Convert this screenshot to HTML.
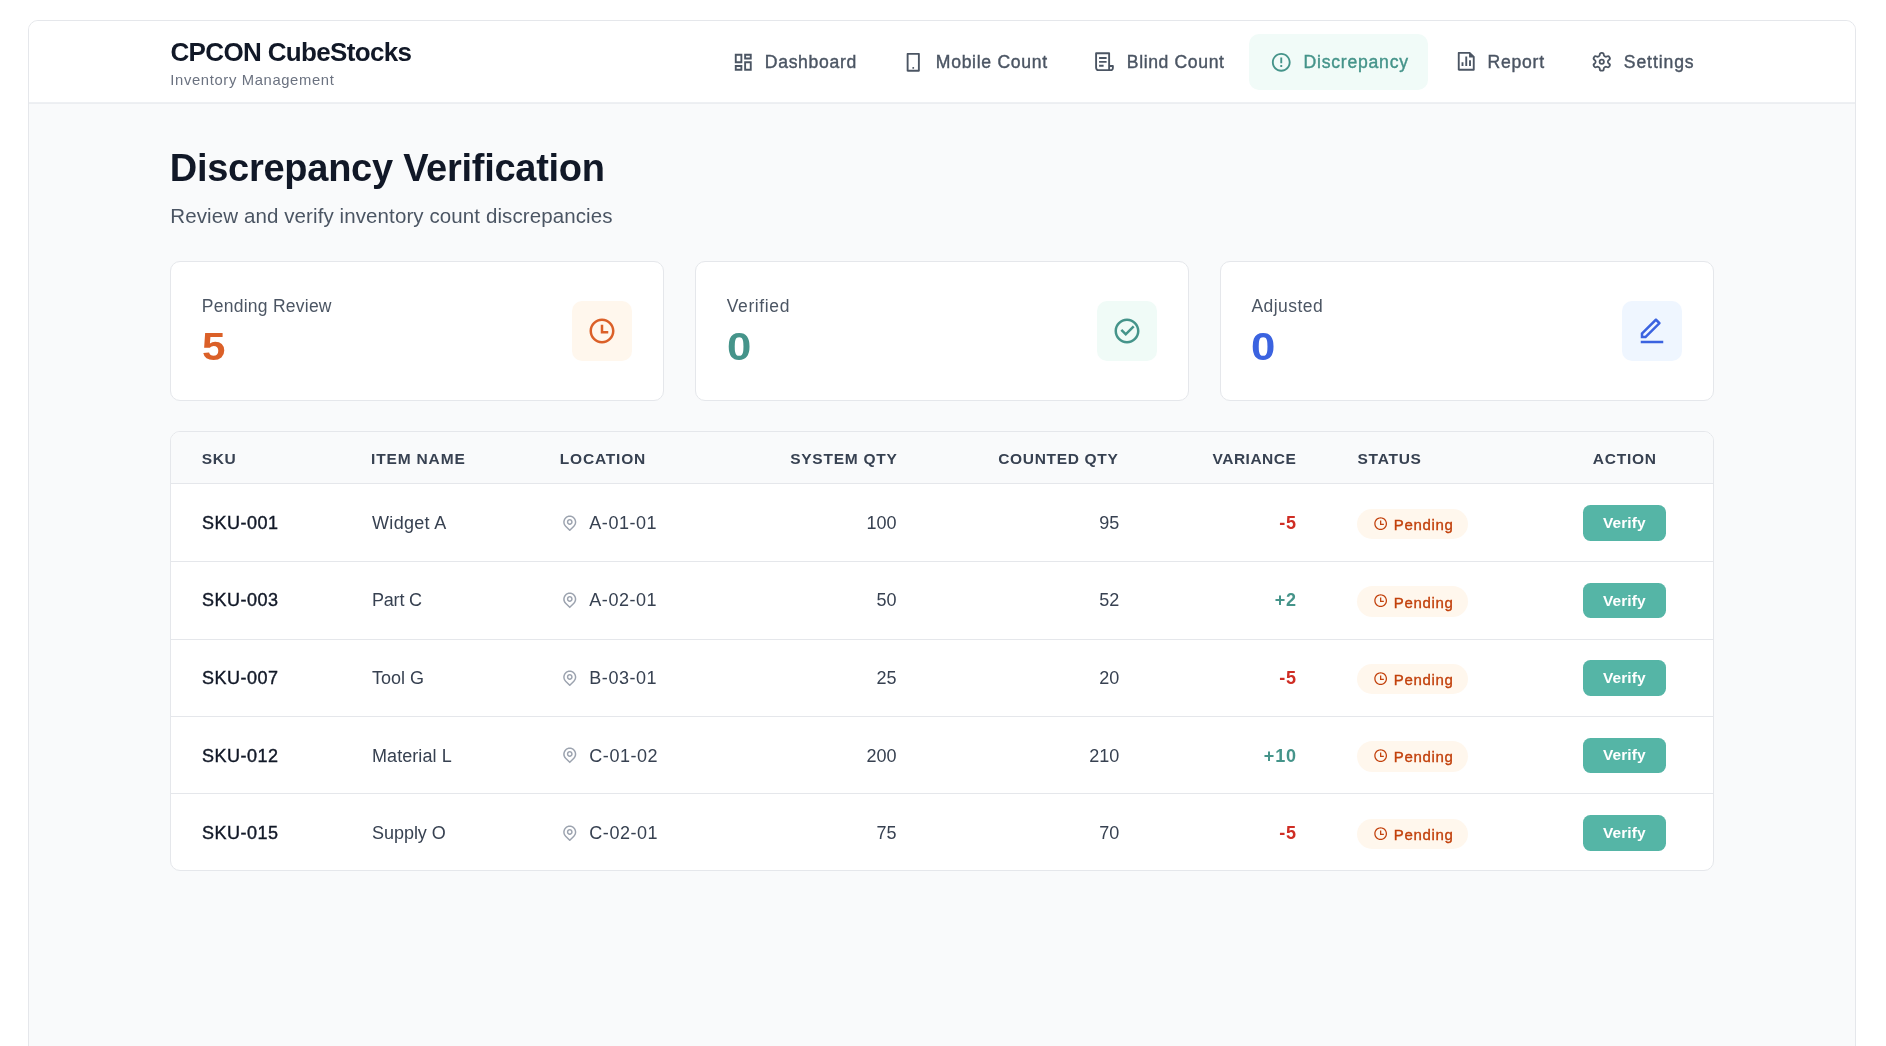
<!DOCTYPE html>
<html><head><meta charset="utf-8"><title>Discrepancy Verification</title>
<style>
html,body{margin:0;padding:0;background:#fff;width:1886px;height:1046px;overflow:hidden;}
body{position:relative;font-family:"Liberation Sans", sans-serif;}
.t{position:absolute;white-space:nowrap;}
</style></head><body>
<div id="root" style="position:absolute;left:0;top:0;width:1886px;height:1046px;will-change:transform;background:#fff;"><div style="position:absolute;left:28px;top:20px;width:1828px;height:1100px;border:1px solid #e5e7eb;border-radius:10px;background:#f9fafb;box-sizing:border-box;"></div><div style="position:absolute;left:29px;top:21px;width:1826px;height:81px;background:#fff;border-radius:9px 9px 0 0;"></div><div style="position:absolute;left:29px;top:102px;width:1826px;height:1px;background:#eef0f3;"></div><div style="position:absolute;left:29px;top:103px;width:1826px;height:1px;background:#eceef1;"></div><div class="t" style="left:170.50px;top:37px;font-size:26px;line-height:30px;color:#111827;font-weight:700;letter-spacing:-0.66px;">CPCON CubeStocks</div><div class="t" style="left:170.30px;top:72px;font-size:14.8px;line-height:16px;color:#6b7280;letter-spacing:0.64px;">Inventory Management</div><svg style="position:absolute;left:731.5px;top:50.65px;" width="22.5" height="22.5" viewBox="0 0 24 24" fill="#4b5563"><path d="M13 21V11H21V21H13ZM3 13V3H11V13H3ZM9 11V5H5V11H9ZM3 21V15H11V21H3ZM5 19H9V17H5V19ZM15 19H19V13H15V19ZM13 3H21V9H13V3ZM15 5V7H19V5H15Z"/></svg><div class="t" style="left:764.80px;top:52px;font-size:17.6px;line-height:20px;color:#4b5563;letter-spacing:0.68px;-webkit-text-stroke:0.4px #4b5563;">Dashboard</div><svg style="position:absolute;left:902.45px;top:50.65px;" width="22.5" height="22.5" viewBox="0 0 24 24" fill="#4b5563"><path d="M7 4V20H17V4H7ZM6 2H18C18.5523 2 19 2.44772 19 3V21C19 21.5523 18.5523 22 18 22H6C5.44772 22 5 21.5523 5 21V3C5 2.44772 5.44772 2 6 2ZM12 17C12.5523 17 13 17.4477 13 18C13 18.5523 12.5523 19 12 19C11.4477 19 11 18.5523 11 18C11 17.4477 11.4477 17 12 17Z"/></svg><div class="t" style="left:935.80px;top:52px;font-size:17.6px;line-height:20px;color:#4b5563;letter-spacing:0.7px;-webkit-text-stroke:0.4px #4b5563;">Mobile Count</div><svg style="position:absolute;left:1093px;top:50px;color:#4b5563" width="22.5" height="22.5" viewBox="0 0 24 24"><g fill="none" stroke="currentColor" stroke-width="2" stroke-linejoin="round"><path d="M17.2 21.5V3.46H3.3V19A2.5 2.5 0 0 0 5.8 21.5H19A2.2 2.2 0 0 0 21.2 19.3V17.07H17.2"/><path d="M6.5 8.57H14.5M6.5 12.7H14.5M6.5 16.8H11.3"/></g></svg><div class="t" style="left:1126.80px;top:52px;font-size:17.6px;line-height:20px;color:#4b5563;letter-spacing:0.62px;-webkit-text-stroke:0.4px #4b5563;">Blind Count</div><div style="position:absolute;left:1249px;top:34px;width:179px;height:56px;background:#f1fbf8;border-radius:10px;"></div><svg style="position:absolute;left:1270.25px;top:50.65px;" width="22.5" height="22.5" viewBox="0 0 24 24" fill="#45948a"><path d="M12 22C6.47715 22 2 17.5228 2 12C2 6.47715 6.47715 2 12 2C17.5228 2 22 6.47715 22 12C22 17.5228 17.5228 22 12 22ZM12 20C16.4183 20 20 16.4183 20 12C20 7.58172 16.4183 4 12 4C7.58172 4 4 7.58172 4 12C4 16.4183 7.58172 20 12 20ZM11 15H13V17H11V15ZM11 7H13V13H11V7Z"/></svg><div class="t" style="left:1303.60px;top:52px;font-size:17.6px;line-height:20px;color:#45948a;letter-spacing:0.76px;-webkit-text-stroke:0.4px #45948a;">Discrepancy</div><svg style="position:absolute;left:1454.85px;top:50.25px;" width="22.5" height="22.5" viewBox="0 0 24 24" fill="#4b5563"><path d="M11 7H13V17H11V7ZM15 11H17V17H15V11ZM7 13H9V17H7V13ZM15 4H5V20H19V8H15V4ZM3 2.9918C3 2.44405 3.44749 2 3.9985 2H16L20.9997 7L21 20.9925C21 21.5489 20.5551 22 20.0066 22H3.9934C3.44476 22 3 21.5447 3 21.0082V2.9918Z"/></svg><div class="t" style="left:1487.50px;top:52px;font-size:17.6px;line-height:20px;color:#4b5563;letter-spacing:0.75px;-webkit-text-stroke:0.4px #4b5563;">Report</div><svg style="position:absolute;left:1590.9px;top:51.15px;color:#4b5563" width="21.5" height="21.5" viewBox="0 0 24 24"><g fill="none" stroke="currentColor" stroke-width="2" stroke-linecap="round" stroke-linejoin="round"><path d="M12.22 2h-.44a2 2 0 0 0-2 2v.18a2 2 0 0 1-1 1.73l-.43.25a2 2 0 0 1-2 0l-.15-.08a2 2 0 0 0-2.73.73l-.22.38a2 2 0 0 0 .73 2.73l.15.1a2 2 0 0 1 1 1.72v.51a2 2 0 0 1-1 1.74l-.15.09a2 2 0 0 0-.73 2.73l.22.38a2 2 0 0 0 2.730.73l.15-.08a2 2 0 0 1 2 0l.43.25a2 2 0 0 1 1 1.73V20a2 2 0 0 0 2 2h.44a2 2 0 0 0 2-2v-.18a2 2 0 0 1 1-1.73l.43-.25a2 2 0 0 1 2 0l.15.08a2 2 0 0 0 2.73-.73l.22-.39a2 2 0 0 0-.73-2.73l-.15-.08a2 2 0 0 1-1-1.74v-.5a2 2 0 0 1 1-1.74l.15-.09a2 2 0 0 0 .73-2.73l-.22-.38a2 2 0 0 0-2.73-.73l-.15.08a2 2 0 0 1-2 0l-.43-.25a2 2 0 0 1-1-1.73V4a2 2 0 0 0-2-2z"/><circle cx="12" cy="12" r="2.4"/></g></svg><div class="t" style="left:1623.80px;top:52px;font-size:17.6px;line-height:20px;color:#4b5563;letter-spacing:0.9px;-webkit-text-stroke:0.4px #4b5563;">Settings</div><div class="t" style="left:169.80px;top:147px;font-size:38px;line-height:42px;color:#111827;font-weight:700;letter-spacing:-0.27px;">Discrepancy Verification</div><div class="t" style="left:170.30px;top:204px;font-size:20.5px;line-height:23px;color:#4b5563;letter-spacing:0.1px;">Review and verify inventory count discrepancies</div><div style="position:absolute;left:170px;top:261px;width:494.33px;height:140px;background:#fff;border:1px solid #e5e7eb;border-radius:10px;box-sizing:border-box;"></div><div class="t" style="left:201.80px;top:296px;font-size:17.5px;line-height:20px;color:#4b5563;letter-spacing:0.25px;">Pending Review</div><div class="t" style="left:202.30px;top:325px;font-size:39px;line-height:43px;color:#db6028;font-weight:700;transform:scaleX(1.08);transform-origin:0 0;">5</div><div style="position:absolute;left:572px;top:301px;width:60px;height:60px;background:#fff7ed;border-radius:10px;"></div><svg style="position:absolute;left:587px;top:316px;" width="30" height="30" viewBox="0 0 24 24" fill="#db6028"><path d="M12 22C6.47715 22 2 17.5228 2 12C2 6.47715 6.47715 2 12 2C17.5228 2 22 6.47715 22 12C22 17.5228 17.5228 22 12 22ZM12 20C16.4183 20 20 16.4183 20 12C20 7.58172 16.4183 4 12 4C7.58172 4 4 7.58172 4 12C4 16.4183 7.58172 20 12 20ZM13 12H17V14H11V7H13V12Z"/></svg><div style="position:absolute;left:695px;top:261px;width:494.33px;height:140px;background:#fff;border:1px solid #e5e7eb;border-radius:10px;box-sizing:border-box;"></div><div class="t" style="left:726.80px;top:296px;font-size:17.5px;line-height:20px;color:#4b5563;letter-spacing:0.6px;">Verified</div><div class="t" style="left:726.70px;top:325px;font-size:39px;line-height:43px;color:#45948a;font-weight:700;transform:scaleX(1.12);transform-origin:0 0;">0</div><div style="position:absolute;left:1097px;top:301px;width:60px;height:60px;background:#f0fbf7;border-radius:10px;"></div><svg style="position:absolute;left:1112px;top:316px;" width="30" height="30" viewBox="0 0 24 24" fill="#45948a"><path d="M12 22C6.47715 22 2 17.5228 2 12C2 6.47715 6.47715 2 12 2C17.5228 2 22 6.47715 22 12C22 17.5228 17.5228 22 12 22ZM12 20C16.4183 20 20 16.4183 20 12C20 7.58172 16.4183 4 12 4C7.58172 4 4 7.58172 4 12C4 16.4183 7.58172 20 12 20ZM11.0026 16L6.75999 11.7574L8.17421 10.3431L11.0026 13.1716L16.6595 7.51472L18.0737 8.92893L11.0026 16Z"/></svg><div style="position:absolute;left:1219.67px;top:261px;width:494.33px;height:140px;background:#fff;border:1px solid #e5e7eb;border-radius:10px;box-sizing:border-box;"></div><div class="t" style="left:1251.47px;top:296px;font-size:17.5px;line-height:20px;color:#4b5563;letter-spacing:0.45px;">Adjusted</div><div class="t" style="left:1251.37px;top:325px;font-size:39px;line-height:43px;color:#3b63e0;font-weight:700;transform:scaleX(1.12);transform-origin:0 0;">0</div><div style="position:absolute;left:1621.67px;top:301px;width:60px;height:60px;background:#eff6ff;border-radius:10px;"></div><svg style="position:absolute;left:1636.67px;top:316px;" width="30" height="30" viewBox="0 0 24 24" fill="#3b63e0"><path d="M6.41421 15.89L16.5563 5.74786L15.1421 4.33365L5 14.4758V15.89H6.41421ZM7.24264 17.89H3V13.6474L14.435 2.21233C14.8256 1.8218 15.4587 1.8218 15.8492 2.21233L18.6777 5.04075C19.0682 5.43128 19.0682 6.06444 18.6777 6.45497L7.24264 17.89ZM3 19.89H21V21.89H3V19.89Z"/></svg><div style="position:absolute;left:170px;top:431px;width:1544px;height:440px;background:#fff;border:1px solid #e5e7eb;border-radius:10px;box-sizing:border-box;overflow:hidden;"></div><div style="position:absolute;left:171px;top:432px;width:1542px;height:51px;background:#f9fafb;border-radius:9px 9px 0 0;"></div><div style="position:absolute;left:171px;top:483px;width:1542px;height:1px;background:#e5e7eb;"></div><div style="position:absolute;left:171px;top:561px;width:1542px;height:1px;background:#e5e7eb;"></div><div style="position:absolute;left:171px;top:639px;width:1542px;height:1px;background:#e5e7eb;"></div><div style="position:absolute;left:171px;top:716px;width:1542px;height:1px;background:#e5e7eb;"></div><div style="position:absolute;left:171px;top:793px;width:1542px;height:1px;background:#e5e7eb;"></div><div class="t" style="left:201.80px;top:450px;font-size:15.5px;line-height:17px;color:#374151;font-weight:700;letter-spacing:0.6px;">SKU</div><div class="t" style="left:371.00px;top:450px;font-size:15.5px;line-height:17px;color:#374151;font-weight:700;letter-spacing:0.85px;">ITEM NAME</div><div class="t" style="left:559.80px;top:450px;font-size:15.5px;line-height:17px;color:#374151;font-weight:700;letter-spacing:0.8px;">LOCATION</div><div class="t" style="right:989.20px;top:450px;font-size:15.5px;line-height:17px;color:#374151;font-weight:700;letter-spacing:0.75px;margin-right:-0.75px;">SYSTEM QTY</div><div class="t" style="right:768.20px;top:450px;font-size:15.5px;line-height:17px;color:#374151;font-weight:700;letter-spacing:0.68px;margin-right:-0.68px;">COUNTED QTY</div><div class="t" style="right:590.20px;top:450px;font-size:15.5px;line-height:17px;color:#374151;font-weight:700;letter-spacing:0.5px;margin-right:-0.5px;">VARIANCE</div><div class="t" style="left:1357.50px;top:450px;font-size:15.5px;line-height:17px;color:#374151;font-weight:700;letter-spacing:0.75px;">STATUS</div><div class="t" style="left:1592.80px;top:450px;font-size:15.5px;line-height:17px;color:#374151;font-weight:700;letter-spacing:0.75px;">ACTION</div><div class="t" style="left:202.00px;top:513px;font-size:18px;line-height:20px;color:#111827;letter-spacing:0.5px;-webkit-text-stroke:0.4px #111827;">SKU-001</div><div class="t" style="left:372.00px;top:513px;font-size:18px;line-height:20px;color:#374151;letter-spacing:0.32px;">Widget A</div><svg style="position:absolute;left:560.8px;top:513.5px;" width="17.5" height="17.5" viewBox="0 0 24 24" fill="#9ca3af"><path d="M12 20.8995L16.9497 15.9497C19.6834 13.2161 19.6834 8.78392 16.9497 6.05025C14.2161 3.31658 9.78392 3.31658 7.05025 6.05025C4.31658 8.78392 4.31658 13.2161 7.05025 15.9497L12 20.8995ZM12 23.7279L5.63604 17.364C2.12132 13.8492 2.12132 8.15076 5.63604 4.63604C9.15076 1.12132 14.8492 1.12132 18.364 4.63604C21.8787 8.15076 21.8787 13.8492 18.364 17.364L12 23.7279ZM12 13C13.1046 13 14 12.1046 14 11C14 9.89543 13.1046 9 12 9C10.8954 9 10 9.89543 10 11C10 12.1046 10.8954 13 12 13ZM12 15C9.79086 15 8 13.2091 8 11C8 8.79086 9.79086 7 12 7C14.2091 7 16 8.79086 16 11C16 13.2091 14.2091 15 12 15Z"/></svg><div class="t" style="left:589.30px;top:513px;font-size:18px;line-height:20px;color:#374151;letter-spacing:0.55px;">A-01-01</div><div class="t" style="right:989.40px;top:513px;font-size:18px;line-height:20px;color:#374151;">100</div><div class="t" style="right:766.80px;top:513px;font-size:18px;line-height:20px;color:#374151;">95</div><div class="t" style="right:590.00px;top:513px;font-size:18px;line-height:20px;color:#cf2d24;font-weight:700;letter-spacing:0.8px;margin-right:-0.8px;">-5</div><div style="position:absolute;left:1357.24px;top:508.6px;width:110.76px;height:30.7px;background:#fff7ed;border-radius:16px;"></div><svg style="position:absolute;left:1372.8px;top:515.9000000000001px;" width="15.3" height="15.3" viewBox="0 0 24 24" fill="#c2410c"><path d="M12 22C6.47715 22 2 17.5228 2 12C2 6.47715 6.47715 2 12 2C17.5228 2 22 6.47715 22 12C22 17.5228 17.5228 22 12 22ZM12 20C16.4183 20 20 16.4183 20 12C20 7.58172 16.4183 4 12 4C7.58172 4 4 7.58172 4 12C4 16.4183 7.58172 20 12 20ZM13 12H17V14H11V7H13V12Z"/></svg><div class="t" style="left:1393.80px;top:516px;font-size:15px;line-height:17px;color:#c2410c;letter-spacing:0.65px;-webkit-text-stroke:0.35px #c2410c;">Pending</div><div style="position:absolute;left:1583.1px;top:505.0px;width:82.8px;height:35.5px;background:#55b5a6;border-radius:7.5px;"></div><div class="t" style="left:1603.00px;top:514px;font-size:15.5px;line-height:17px;color:#ffffff;font-weight:700;letter-spacing:0.07px;">Verify</div><div class="t" style="left:202.00px;top:590px;font-size:18px;line-height:20px;color:#111827;letter-spacing:0.5px;-webkit-text-stroke:0.4px #111827;">SKU-003</div><div class="t" style="left:372.00px;top:590px;font-size:18px;line-height:20px;color:#374151;letter-spacing:-0.2px;">Part C</div><svg style="position:absolute;left:560.8px;top:591.0px;" width="17.5" height="17.5" viewBox="0 0 24 24" fill="#9ca3af"><path d="M12 20.8995L16.9497 15.9497C19.6834 13.2161 19.6834 8.78392 16.9497 6.05025C14.2161 3.31658 9.78392 3.31658 7.05025 6.05025C4.31658 8.78392 4.31658 13.2161 7.05025 15.9497L12 20.8995ZM12 23.7279L5.63604 17.364C2.12132 13.8492 2.12132 8.15076 5.63604 4.63604C9.15076 1.12132 14.8492 1.12132 18.364 4.63604C21.8787 8.15076 21.8787 13.8492 18.364 17.364L12 23.7279ZM12 13C13.1046 13 14 12.1046 14 11C14 9.89543 13.1046 9 12 9C10.8954 9 10 9.89543 10 11C10 12.1046 10.8954 13 12 13ZM12 15C9.79086 15 8 13.2091 8 11C8 8.79086 9.79086 7 12 7C14.2091 7 16 8.79086 16 11C16 13.2091 14.2091 15 12 15Z"/></svg><div class="t" style="left:589.30px;top:590px;font-size:18px;line-height:20px;color:#374151;letter-spacing:0.55px;">A-02-01</div><div class="t" style="right:989.40px;top:590px;font-size:18px;line-height:20px;color:#374151;">50</div><div class="t" style="right:766.80px;top:590px;font-size:18px;line-height:20px;color:#374151;">52</div><div class="t" style="right:590.00px;top:590px;font-size:18px;line-height:20px;color:#45948a;font-weight:700;letter-spacing:0.8px;margin-right:-0.8px;">+2</div><div style="position:absolute;left:1357.24px;top:586.1px;width:110.76px;height:30.7px;background:#fff7ed;border-radius:16px;"></div><svg style="position:absolute;left:1372.8px;top:593.4000000000001px;" width="15.3" height="15.3" viewBox="0 0 24 24" fill="#c2410c"><path d="M12 22C6.47715 22 2 17.5228 2 12C2 6.47715 6.47715 2 12 2C17.5228 2 22 6.47715 22 12C22 17.5228 17.5228 22 12 22ZM12 20C16.4183 20 20 16.4183 20 12C20 7.58172 16.4183 4 12 4C7.58172 4 4 7.58172 4 12C4 16.4183 7.58172 20 12 20ZM13 12H17V14H11V7H13V12Z"/></svg><div class="t" style="left:1393.80px;top:594px;font-size:15px;line-height:17px;color:#c2410c;letter-spacing:0.65px;-webkit-text-stroke:0.35px #c2410c;">Pending</div><div style="position:absolute;left:1583.1px;top:582.5px;width:82.8px;height:35.5px;background:#55b5a6;border-radius:7.5px;"></div><div class="t" style="left:1603.00px;top:592px;font-size:15.5px;line-height:17px;color:#ffffff;font-weight:700;letter-spacing:0.07px;">Verify</div><div class="t" style="left:202.00px;top:668px;font-size:18px;line-height:20px;color:#111827;letter-spacing:0.5px;-webkit-text-stroke:0.4px #111827;">SKU-007</div><div class="t" style="left:372.00px;top:668px;font-size:18px;line-height:20px;color:#374151;letter-spacing:0.02px;">Tool G</div><svg style="position:absolute;left:560.8px;top:668.5px;" width="17.5" height="17.5" viewBox="0 0 24 24" fill="#9ca3af"><path d="M12 20.8995L16.9497 15.9497C19.6834 13.2161 19.6834 8.78392 16.9497 6.05025C14.2161 3.31658 9.78392 3.31658 7.05025 6.05025C4.31658 8.78392 4.31658 13.2161 7.05025 15.9497L12 20.8995ZM12 23.7279L5.63604 17.364C2.12132 13.8492 2.12132 8.15076 5.63604 4.63604C9.15076 1.12132 14.8492 1.12132 18.364 4.63604C21.8787 8.15076 21.8787 13.8492 18.364 17.364L12 23.7279ZM12 13C13.1046 13 14 12.1046 14 11C14 9.89543 13.1046 9 12 9C10.8954 9 10 9.89543 10 11C10 12.1046 10.8954 13 12 13ZM12 15C9.79086 15 8 13.2091 8 11C8 8.79086 9.79086 7 12 7C14.2091 7 16 8.79086 16 11C16 13.2091 14.2091 15 12 15Z"/></svg><div class="t" style="left:589.30px;top:668px;font-size:18px;line-height:20px;color:#374151;letter-spacing:0.55px;">B-03-01</div><div class="t" style="right:989.40px;top:668px;font-size:18px;line-height:20px;color:#374151;">25</div><div class="t" style="right:766.80px;top:668px;font-size:18px;line-height:20px;color:#374151;">20</div><div class="t" style="right:590.00px;top:668px;font-size:18px;line-height:20px;color:#cf2d24;font-weight:700;letter-spacing:0.8px;margin-right:-0.8px;">-5</div><div style="position:absolute;left:1357.24px;top:663.6px;width:110.76px;height:30.7px;background:#fff7ed;border-radius:16px;"></div><svg style="position:absolute;left:1372.8px;top:670.9000000000001px;" width="15.3" height="15.3" viewBox="0 0 24 24" fill="#c2410c"><path d="M12 22C6.47715 22 2 17.5228 2 12C2 6.47715 6.47715 2 12 2C17.5228 2 22 6.47715 22 12C22 17.5228 17.5228 22 12 22ZM12 20C16.4183 20 20 16.4183 20 12C20 7.58172 16.4183 4 12 4C7.58172 4 4 7.58172 4 12C4 16.4183 7.58172 20 12 20ZM13 12H17V14H11V7H13V12Z"/></svg><div class="t" style="left:1393.80px;top:671px;font-size:15px;line-height:17px;color:#c2410c;letter-spacing:0.65px;-webkit-text-stroke:0.35px #c2410c;">Pending</div><div style="position:absolute;left:1583.1px;top:660.0px;width:82.8px;height:35.5px;background:#55b5a6;border-radius:7.5px;"></div><div class="t" style="left:1603.00px;top:669px;font-size:15.5px;line-height:17px;color:#ffffff;font-weight:700;letter-spacing:0.07px;">Verify</div><div class="t" style="left:202.00px;top:746px;font-size:18px;line-height:20px;color:#111827;letter-spacing:0.5px;-webkit-text-stroke:0.4px #111827;">SKU-012</div><div class="t" style="left:372.00px;top:746px;font-size:18px;line-height:20px;color:#374151;letter-spacing:0.07px;">Material L</div><svg style="position:absolute;left:560.8px;top:746.0px;" width="17.5" height="17.5" viewBox="0 0 24 24" fill="#9ca3af"><path d="M12 20.8995L16.9497 15.9497C19.6834 13.2161 19.6834 8.78392 16.9497 6.05025C14.2161 3.31658 9.78392 3.31658 7.05025 6.05025C4.31658 8.78392 4.31658 13.2161 7.05025 15.9497L12 20.8995ZM12 23.7279L5.63604 17.364C2.12132 13.8492 2.12132 8.15076 5.63604 4.63604C9.15076 1.12132 14.8492 1.12132 18.364 4.63604C21.8787 8.15076 21.8787 13.8492 18.364 17.364L12 23.7279ZM12 13C13.1046 13 14 12.1046 14 11C14 9.89543 13.1046 9 12 9C10.8954 9 10 9.89543 10 11C10 12.1046 10.8954 13 12 13ZM12 15C9.79086 15 8 13.2091 8 11C8 8.79086 9.79086 7 12 7C14.2091 7 16 8.79086 16 11C16 13.2091 14.2091 15 12 15Z"/></svg><div class="t" style="left:589.30px;top:746px;font-size:18px;line-height:20px;color:#374151;letter-spacing:0.55px;">C-01-02</div><div class="t" style="right:989.40px;top:746px;font-size:18px;line-height:20px;color:#374151;">200</div><div class="t" style="right:766.80px;top:746px;font-size:18px;line-height:20px;color:#374151;">210</div><div class="t" style="right:590.00px;top:746px;font-size:18px;line-height:20px;color:#45948a;font-weight:700;letter-spacing:0.8px;margin-right:-0.8px;">+10</div><div style="position:absolute;left:1357.24px;top:741.1px;width:110.76px;height:30.7px;background:#fff7ed;border-radius:16px;"></div><svg style="position:absolute;left:1372.8px;top:748.4000000000001px;" width="15.3" height="15.3" viewBox="0 0 24 24" fill="#c2410c"><path d="M12 22C6.47715 22 2 17.5228 2 12C2 6.47715 6.47715 2 12 2C17.5228 2 22 6.47715 22 12C22 17.5228 17.5228 22 12 22ZM12 20C16.4183 20 20 16.4183 20 12C20 7.58172 16.4183 4 12 4C7.58172 4 4 7.58172 4 12C4 16.4183 7.58172 20 12 20ZM13 12H17V14H11V7H13V12Z"/></svg><div class="t" style="left:1393.80px;top:748px;font-size:15px;line-height:17px;color:#c2410c;letter-spacing:0.65px;-webkit-text-stroke:0.35px #c2410c;">Pending</div><div style="position:absolute;left:1583.1px;top:737.5px;width:82.8px;height:35.5px;background:#55b5a6;border-radius:7.5px;"></div><div class="t" style="left:1603.00px;top:746px;font-size:15.5px;line-height:17px;color:#ffffff;font-weight:700;letter-spacing:0.07px;">Verify</div><div class="t" style="left:202.00px;top:823px;font-size:18px;line-height:20px;color:#111827;letter-spacing:0.5px;-webkit-text-stroke:0.4px #111827;">SKU-015</div><div class="t" style="left:372.00px;top:823px;font-size:18px;line-height:20px;color:#374151;letter-spacing:-0.04px;">Supply O</div><svg style="position:absolute;left:560.8px;top:823.5px;" width="17.5" height="17.5" viewBox="0 0 24 24" fill="#9ca3af"><path d="M12 20.8995L16.9497 15.9497C19.6834 13.2161 19.6834 8.78392 16.9497 6.05025C14.2161 3.31658 9.78392 3.31658 7.05025 6.05025C4.31658 8.78392 4.31658 13.2161 7.05025 15.9497L12 20.8995ZM12 23.7279L5.63604 17.364C2.12132 13.8492 2.12132 8.15076 5.63604 4.63604C9.15076 1.12132 14.8492 1.12132 18.364 4.63604C21.8787 8.15076 21.8787 13.8492 18.364 17.364L12 23.7279ZM12 13C13.1046 13 14 12.1046 14 11C14 9.89543 13.1046 9 12 9C10.8954 9 10 9.89543 10 11C10 12.1046 10.8954 13 12 13ZM12 15C9.79086 15 8 13.2091 8 11C8 8.79086 9.79086 7 12 7C14.2091 7 16 8.79086 16 11C16 13.2091 14.2091 15 12 15Z"/></svg><div class="t" style="left:589.30px;top:823px;font-size:18px;line-height:20px;color:#374151;letter-spacing:0.55px;">C-02-01</div><div class="t" style="right:989.40px;top:823px;font-size:18px;line-height:20px;color:#374151;">75</div><div class="t" style="right:766.80px;top:823px;font-size:18px;line-height:20px;color:#374151;">70</div><div class="t" style="right:590.00px;top:823px;font-size:18px;line-height:20px;color:#cf2d24;font-weight:700;letter-spacing:0.8px;margin-right:-0.8px;">-5</div><div style="position:absolute;left:1357.24px;top:818.6px;width:110.76px;height:30.7px;background:#fff7ed;border-radius:16px;"></div><svg style="position:absolute;left:1372.8px;top:825.9000000000001px;" width="15.3" height="15.3" viewBox="0 0 24 24" fill="#c2410c"><path d="M12 22C6.47715 22 2 17.5228 2 12C2 6.47715 6.47715 2 12 2C17.5228 2 22 6.47715 22 12C22 17.5228 17.5228 22 12 22ZM12 20C16.4183 20 20 16.4183 20 12C20 7.58172 16.4183 4 12 4C7.58172 4 4 7.58172 4 12C4 16.4183 7.58172 20 12 20ZM13 12H17V14H11V7H13V12Z"/></svg><div class="t" style="left:1393.80px;top:826px;font-size:15px;line-height:17px;color:#c2410c;letter-spacing:0.65px;-webkit-text-stroke:0.35px #c2410c;">Pending</div><div style="position:absolute;left:1583.1px;top:815.0px;width:82.8px;height:35.5px;background:#55b5a6;border-radius:7.5px;"></div><div class="t" style="left:1603.00px;top:824px;font-size:15.5px;line-height:17px;color:#ffffff;font-weight:700;letter-spacing:0.07px;">Verify</div></div>
</body></html>
